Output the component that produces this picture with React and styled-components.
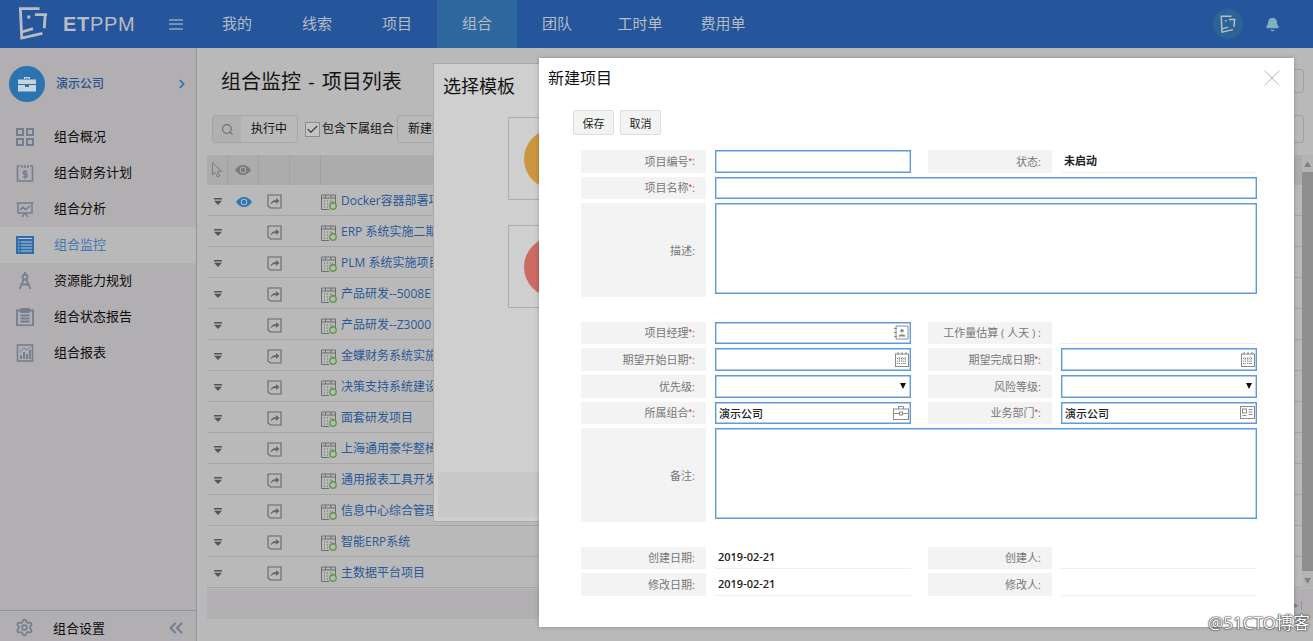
import React from "react";
import styled, { createGlobalStyle } from "styled-components";
import { Search, X, ChevronRight, ChevronsLeft, Check, Bell, Settings } from "lucide-react";

const GlobalStyle = createGlobalStyle`
  html, body {
    margin: 0;
    padding: 0;
    background: #b9b9b9;
  }
  * {
    box-sizing: border-box;
  }
  body {
    font-family: "Open Sans", "Noto Sans CJK SC", sans-serif;
  }
`;

const Page = styled.div`
  position: relative;
  width: 1313px;
  height: 641px;
  overflow: hidden;
  display: flex;
  flex-direction: column;
`;

const Header = styled.header`
  height: 48px;
  flex: none;
  display: flex;
  align-items: center;
  background: #25559a;
`;

const Brand = styled.div`
  width: 197px;
  height: 48px;
  flex: none;
  display: flex;
  align-items: center;
  padding-left: 18px;
`;

const BrandName = styled.span`
  margin-left: 15px;
  color: #b9bcc2;
  font-family: "Liberation Sans", sans-serif;
  font-size: 20px;
  letter-spacing: 0.7px;
  b {
    font-weight: 700;
  }
`;

const Burger = styled.span`
  margin-left: 34px;
  width: 14px;
  height: 11px;
  border-top: 2px solid #6f93b8;
  border-bottom: 2px solid #6f93b8;
  position: relative;
  &::after {
    content: "";
    position: absolute;
    left: 0;
    right: 0;
    top: 2.5px;
    height: 2px;
    background: #6f93b8;
  }
`;

const TopNav = styled.nav`
  display: flex;
  height: 48px;
`;

const TopItem = styled.a`
  width: ${(p) => p.$w || 80}px;
  display: flex;
  align-items: center;
  justify-content: center;
  padding-bottom: 4px;
  font-size: 15px;
  color: #b4bcc6;
  background: ${(p) => (p.$active ? "#2f689f" : "transparent")};
`;

const HeaderRight = styled.div`
  margin-left: auto;
  display: flex;
  align-items: center;
  gap: 22px;
  padding-right: 33px;
`;

const Avatar = styled.div`
  width: 30px;
  height: 30px;
  border-radius: 50%;
  background: #2a6499;
  display: flex;
  align-items: center;
  justify-content: center;
`;

const Body = styled.div`
  flex: 1;
  display: flex;
  min-height: 0;
`;

const Sidebar = styled.aside`
  width: 197px;
  flex: none;
  display: flex;
  flex-direction: column;
  background: #b2afb2;
  border-right: 1px solid #8e96a3;
`;

const Company = styled.div`
  height: 71px;
  display: flex;
  align-items: center;
  padding-left: 9px;
  padding-right: 7px;
`;

const CompanyBadge = styled.div`
  width: 36px;
  height: 36px;
  border-radius: 50%;
  background: #2c74b0;
  display: flex;
  align-items: center;
  justify-content: center;
`;

const CompanyName = styled.span`
  margin-left: 11px;
  padding-bottom: 2px;
  font-size: 12px;
  font-weight: 500;
  color: #27558f;
  flex: 1;
`;

const MenuItem = styled.a`
  height: 36px;
  display: flex;
  align-items: center;
  gap: 20px;
  padding-left: 16px;
  font-size: 13px;
  color: ${(p) => (p.$active ? "#4478b2" : "#0c0c0c")};
  background: ${(p) => (p.$active ? "#b9b9b9" : "transparent")};
  span {
    padding-bottom: 3px;
  }
`;

const SideFooter = styled.div`
  margin-top: auto;
  height: 31px;
  display: flex;
  align-items: center;
  border-top: 1px solid #8e96a3;
  padding: 3px 9px 0 15px;
  font-size: 13px;
  color: #0c0c0c;
  span {
    margin-left: 19px;
    padding-bottom: 1px;
    flex: 1;
  }
`;

const Main = styled.main`
  flex: 1;
  min-width: 0;
  padding: 21px 0 0 10px;
  background: #b9b9b9;
`;

const TitleRow = styled.div`
  height: 24px;
  margin-bottom: 22px;
  display: flex;
  align-items: center;
  padding-left: 14px;
  padding-right: 9px;
  justify-content: space-between;
`;

const Title = styled.h1`
  margin: 0;
  padding-bottom: 2px;
  font-size: 20px;
  font-weight: 400;
  word-spacing: 2px;
  color: #141414;
`;

const GhostButton = styled.div`
  width: 60px;
  height: ${(p) => p.$h || 24}px;
  border: 1px solid #a0a0a0;
  border-radius: 3px;
`;

const Toolbar = styled.div`
  height: 28px;
  margin: 0 9px 12px 5px;
  display: flex;
  align-items: center;
  font-size: 12px;
  color: #141414;
`;

const SearchGroup = styled.div`
  width: 86px;
  height: 28px;
  display: flex;
  border: 1px solid #a5a5a5;
  border-radius: 3px;
  overflow: hidden;
`;

const SearchIcon = styled.div`
  width: 28px;
  display: flex;
  align-items: center;
  justify-content: center;
  background: #b0b0b0;
`;

const SearchValue = styled.div`
  flex: 1;
  display: flex;
  align-items: center;
  justify-content: center;
  padding-bottom: 2px;
`;

const CheckBox = styled.span`
  width: 15px;
  height: 15px;
  margin-left: 7px;
  margin-right: 2px;
  border: 1px solid #8d8d8d;
  background: #c4c4c4;
  display: flex;
  align-items: center;
  justify-content: center;
`;

const CheckLabel = styled.span`
  padding-bottom: 2px;
`;

const NewButton = styled.div`
  height: 28px;
  margin-left: 3px;
  padding: 0 10px 2px;
  display: flex;
  align-items: center;
  border: 1px solid #a5a5a5;
  border-radius: 3px;
`;

const GhostPush = styled.div`
  margin-left: auto;
`;

const TableWrap = styled.div`
  display: flex;
`;

const Table = styled.div`
  flex: 1;
  min-width: 0;
`;

const Columns = "21px 31px 31px 31px 1fr";

const HeadRow = styled.div`
  height: 30px;
  display: grid;
  grid-template-columns: ${Columns};
  background: #acacac;
`;

const HeadCell = styled.div`
  display: flex;
  align-items: center;
  justify-content: center;
  border-right: 1px solid #a2a2a2;
  &:last-child {
    border-right: 0;
  }
`;

const Row = styled.div`
  height: 31px;
  padding-top: 3px;
  display: grid;
  grid-template-columns: ${Columns};
  align-items: center;
  border-bottom: 1px solid #a6a6a6;
`;

const Cell = styled.div`
  display: flex;
  align-items: center;
  justify-content: center;
`;

const NameCell = styled.div`
  display: flex;
  align-items: center;
  gap: 4px;
  font-size: 12px;
  color: #2a5897;
  white-space: nowrap;
  span {
    margin-top: -4px;
  }
`;

const Scrollbar = styled.div`
  width: 11px;
  flex: none;
  display: flex;
  flex-direction: column;
  align-items: center;
  background: #b4b4b4;
`;

const ScrollArrow = styled.div`
  height: 17px;
  display: flex;
  align-items: center;
  justify-content: center;
  color: #7f7f7f;
  font-size: 7px;
`;

const ScrollThumb = styled.div`
  flex: 1;
  width: 100%;
  background: #8e8e8e;
`;

const TableFooter = styled.div`
  height: 30px;
  margin-top: 1px;
  display: flex;
  align-items: center;
  padding-left: 1087px;
  background: #b2afb2;
  color: #808080;
  font-size: 9px;
`;

const TemplateModal = styled.section`
  position: absolute;
  left: 433px;
  top: 63px;
  width: 800px;
  height: 459px;
  background: #cfcfcf;
  border: 1px solid #a9a9a9;
  padding: 10px 0 0 9px;
`;

const TemplateTitle = styled.h2`
  margin: 0;
  font-size: 18px;
  font-weight: 400;
  color: #141414;
  line-height: 25px;
`;

const TemplateList = styled.div`
  margin: 18px 0 0 65px;
  display: flex;
  flex-direction: column;
  gap: 25px;
`;

const TemplateCard = styled.div`
  width: 300px;
  height: 83px;
  display: flex;
  align-items: center;
  padding-left: 15px;
  border: 1px solid #adadad;
`;

const TemplateDot = styled.div`
  width: 60px;
  height: 60px;
  border-radius: 50%;
  background: ${(p) => p.$color};
`;

const TemplateFooter = styled.div`
  position: absolute;
  left: 4px;
  right: 4px;
  bottom: 4px;
  height: 45px;
  background: #c8c8c8;
`;

const ProjectModal = styled.section`
  position: absolute;
  left: 539px;
  top: 58px;
  width: 755px;
  height: 569px;
  background: #fff;
  box-shadow: 0 0 4px rgba(0, 0, 0, 0.25);
`;

const ModalHead = styled.div`
  height: 40px;
  display: flex;
  align-items: center;
  justify-content: space-between;
  padding: 0 8px 0 9px;
`;

const ModalTitle = styled.h2`
  margin: 0;
  padding-bottom: 2px;
  font-size: 16px;
  font-weight: 400;
  color: #141414;
`;

const ModalActions = styled.div`
  margin: 12px 0 15px 34px;
  display: flex;
  gap: 6px;
`;

const ActionButton = styled.button`
  width: 41px;
  height: 25px;
  padding: 0;
  font-family: inherit;
  font-size: 11px;
  color: #222;
  background: #f3f3f3;
  border: 1px solid #dedede;
  border-radius: 2px;
`;

const Form = styled.div`
  margin-left: 42px;
  display: flex;
  flex-direction: column;
`;

const Section = styled.div`
  display: flex;
  flex-direction: column;
  gap: 4px;
  margin-bottom: 24.3px;
`;

const FormRow = styled.div`
  display: grid;
  grid-template-columns: 125px 196px 132px 196px;
  column-gap: 9px;
  height: ${(p) => p.$h || 22.67}px;
`;

const Label = styled.div`
  display: flex;
  align-items: center;
  justify-content: flex-end;
  padding: 0 11px 1px 0;
  margin-left: ${(p) => (p.$second ? 8 : 0)}px;
  font-size: 11px;
  color: #777;
  background: #f3f3f3;
  white-space: nowrap;
  i {
    font-family: "Liberation Sans", sans-serif;
    font-style: normal;
    font-size: 9px;
    color: #c0392b;
  }
`;

const Input = styled.div`
  grid-column: ${(p) => (p.$wide ? "span 3" : "auto")};
  height: ${(p) => (p.$area ? "91px" : "auto")};
  display: flex;
  align-items: center;
  justify-content: space-between;
  padding: 0 1px 0 3px;
  font-size: 11px;
  font-weight: 500;
  color: #222;
  background: #fff;
  border: 1px solid #5f9bdc;
  box-shadow: inset 0 0 0 0.4px #5f9bdc;
`;

const Static = styled.div`
  display: flex;
  align-items: center;
  padding: 0 0 1px 3px;
  font-size: 11px;
  font-weight: 600;
  color: #222;
  border-bottom: 1px solid #eee;
`;

const Caret = styled.span`
  width: 0;
  height: 0;
  margin-right: 3px;
  border-left: 3.5px solid transparent;
  border-right: 3.5px solid transparent;
  border-top: 6px solid #111;
`;

const Watermark = styled.div`
  position: absolute;
  right: 3px;
  bottom: 7px;
  font-size: 17px;
  color: #fff;
  text-shadow: 0 0 2px #333, 0 0 1px #333, 0 0 1px #333;
`;

const LogoMark = ({ size = 30, color = "#b9bcc2" }) => (
  <svg width={size} height={size * 1.17} viewBox="17 5 32 36" fill="none" stroke={color} strokeWidth="3">
    <path d="M40 7H19.500L21 38.500L43 33.500" />
    <path d="M21 32L33 28.500" />
    <path d="M35 13.500H48M46 13.500L45 28" />
    <circle cx="28.500" cy="16" r="1.800" fill={color} stroke="none" />
  </svg>
);

const Briefcase = ({ color = "#c9d3dc", size = 20 }) => (
  <svg width={size} height={size} viewBox="0 0 20 20" fill={color}>
    <path d="M7 5V3h6v2h-1.300V4.300H8.300V5z" />
    <path d="M1 5.500h18V10H1zM1 11h7v2h4v-2h7v6.500H1z" />
  </svg>
);

const ic = "#737f8f";

const GridIcon = () => (
  <svg width="18" height="18" viewBox="0 0 18 18" fill="none" stroke={ic} strokeWidth="2">
    <rect x="1" y="1" width="6" height="6" />
    <rect x="11" y="1" width="6" height="6" />
    <rect x="1" y="11" width="6" height="6" />
    <rect x="11" y="11" width="6" height="6" />
  </svg>
);

const BudgetIcon = () => (
  <svg width="18" height="18" viewBox="0 0 18 18" fill="none" stroke={ic} strokeWidth="1.600">
    <path d="M4 2H1.500v15h15V2H14M6 1v3M9 1v3M12 1v3" />
    <path d="M11.500 7.500H7.500v2.600h3.500v2.800H6.500M9 6v9" strokeWidth="1.300" />
  </svg>
);

const ChartBoardIcon = () => (
  <svg width="18" height="18" viewBox="0 0 18 18" fill="none" stroke={ic} strokeWidth="1.500">
    <path d="M0.500 3h17M2 3v10h14V3M6 17l3-4 3 4" />
    <path d="M4 10l3-3 2.500 2.500L14 6" />
  </svg>
);

const MonitorIcon = () => (
  <svg width="18" height="18" viewBox="0 0 18 18">
    <rect width="18" height="18" fill="#2f6cac" />
    <path d="M2 2.500h14M5 6h11M5 9h11M5 12h11M5 15h11" stroke="#b9c6d2" strokeWidth="1.200" />
    <path d="M2 6h1.500M2 9h1.500M2 12h1.500M2 15h1.500" stroke="#b9c6d2" strokeWidth="1.200" />
  </svg>
);

const CompassIcon = () => (
  <svg width="18" height="18" viewBox="0 0 18 18" fill="none" stroke={ic} strokeWidth="1.800">
    <circle cx="9" cy="5" r="2.500" />
    <path d="M7.800 7.500L3.500 17M10.200 7.500L14.500 17M4.500 12.500h9" />
    <path d="M9 0v2.500" />
  </svg>
);

const ReportIcon = () => (
  <svg width="18" height="18" viewBox="0 0 18 18" fill="none" stroke={ic} strokeWidth="1.800">
    <path d="M5 2.500H1v15h16v-15h-4" />
    <rect x="5" y="1" width="8" height="3" fill={ic} />
    <path d="M4.500 7.500h9M4.500 10.500h9M4.500 13.500h9" />
  </svg>
);

const StatsIcon = () => (
  <svg width="18" height="18" viewBox="0 0 18 18" fill="none" stroke={ic} strokeWidth="1.600">
    <rect x="1.500" y="1" width="15" height="16" />
    <path d="M5 15V11M8 15V8M11 15V10M14 15V6" strokeWidth="2" />
    <path d="M3.500 8L8 4l3 2 3.500-3" strokeWidth="1" />
  </svg>
);

const CursorIcon = () => (
  <svg width="10" height="16" viewBox="0 0 10 16" fill="none" stroke="#7b7b7b">
    <path d="M.5.800v12l3-2.600 2 4.800 2.200-1-2-4.600h4z" />
  </svg>
);

const EyeIcon = ({ color = "#7b7b7b", bg = "#acacac" }) => (
  <svg width="16" height="10" viewBox="0 0 16 10">
    <path d="M0 5C3 1 5.500 0 8 0s5 1 8 5c-3 4-5.500 5-8 5S3 9 0 5z" fill={color} />
    <circle cx="8" cy="5" r="3.200" fill={bg} />
    <circle cx="8" cy="5" r="2.200" fill={color} />
  </svg>
);

const SortIcon = () => (
  <svg width="8" height="7" viewBox="0 0 8 7" fill="#555">
    <rect x="0" y="0" width="8" height="1.500" />
    <path d="M0 2.800h8L4 7z" />
  </svg>
);

const OpenIcon = () => (
  <svg width="15" height="15" viewBox="0 0 15 15" fill="none" stroke="#666" strokeWidth="1.100">
    <path d="M1 1h13v13H3.500L1 12z" />
    <path d="M3.500 10.500C4 7.500 6 6 9 6V4l3.500 3L9 10V8c-2.500 0-4 .8-5.500 2.500z" fill="#666" stroke="none" />
  </svg>
);

const ProjectIcon = () => (
  <svg width="16" height="16" viewBox="0 0 16 16" fill="none">
    <path d="M.5 1h14v8M.5 1v14.500H8M.5 4h14M4.500 1v3M10 1v3" stroke="#6d6d6d" />
    <path d="M3 7h1M6 7h1M9 7h1M3 10h1M6 10h1M3 13h1M6 13h1" stroke="#6d6d6d" />
    <circle cx="12" cy="12" r="3.200" stroke="#5f9c45" strokeWidth="1.400" />
    <path d="M12 6.500v4l-2-2z" fill="#5f9c45" />
  </svg>
);

const CardIcon = () => (
  <svg width="16" height="15" viewBox="0 0 16 15" fill="none" stroke="#8a8a8a">
    <path d="M3 1h12v13H3zM1 3.500h3M1 7.500h3M1 11.500h3" />
    <circle cx="9" cy="5.800" r="1.800" fill="#8a8a8a" stroke="none" />
    <path d="M5.500 11.500c.5-3 6.500-3 7 0z" fill="#8a8a8a" stroke="none" />
  </svg>
);

const CalendarIcon = () => (
  <svg width="14" height="15" viewBox="0 0 14 15" fill="none" stroke="#8a8a8a">
    <rect x=".5" y="2" width="13" height="12.500" />
    <path d="M3 0v3M7 0v3M11 0v3" />
    <path d="M2 6.500h10M2 9h10M2 11.500h10M4 5v8M7 5v8M10 5v8" strokeDasharray="1 1" />
  </svg>
);

const CaseIcon = () => (
  <svg width="16" height="14" viewBox="0 0 16 14" fill="none" stroke="#8a8a8a">
    <rect x=".5" y="3" width="15" height="10.500" />
    <path d="M5.500 3V.5h5V3M.5 7.500h6M9.500 7.500h6" />
    <rect x="6.500" y="6" width="3" height="3" />
  </svg>
);

const DeptIcon = () => (
  <svg width="15" height="14" viewBox="0 0 15 14" fill="none" stroke="#8a8a8a">
    <rect x=".5" y=".5" width="14" height="12" />
    <rect x="2.500" y="3" width="4" height="4" />
    <path d="M8.500 3.500h4M8.500 6h4M8.500 8.500h4M2.500 9.500h4" />
  </svg>
);

const topItems = [
  { label: "我的" },
  { label: "线索" },
  { label: "项目" },
  { label: "组合", active: true },
  { label: "团队" },
  { label: "工时单", w: 86 },
  { label: "费用单" },
];

const menu = [
  { label: "组合概况", icon: <GridIcon /> },
  { label: "组合财务计划", icon: <BudgetIcon /> },
  { label: "组合分析", icon: <ChartBoardIcon /> },
  { label: "组合监控", icon: <MonitorIcon />, active: true },
  { label: "资源能力规划", icon: <CompassIcon /> },
  { label: "组合状态报告", icon: <ReportIcon /> },
  { label: "组合报表", icon: <StatsIcon /> },
];

const projects = [
  "Docker容器部署项目",
  "ERP 系统实施二期项目",
  "PLM 系统实施项目",
  "产品研发--5008E",
  "产品研发--Z3000",
  "金蝶财务系统实施",
  "决策支持系统建设",
  "面套研发项目",
  "上海通用豪华整椅",
  "通用报表工具开发",
  "信息中心综合管理",
  "智能ERP系统",
  "主数据平台项目",
];

const Req = () => <i>*</i>;

export default function App() {
  return (
    <Page>
      <GlobalStyle />
      <Header>
        <Brand>
          <LogoMark />
          <BrandName>
            <b>ET</b>PPM
          </BrandName>
          <Burger />
        </Brand>
        <TopNav>
          {topItems.map((t) => (
            <TopItem key={t.label} $active={t.active} $w={t.w}>
              {t.label}
            </TopItem>
          ))}
        </TopNav>
        <HeaderRight>
          <Avatar>
            <LogoMark size={16} />
          </Avatar>
          <Bell size={15} color="#7fb0c0" fill="#7fb0c0" />
        </HeaderRight>
      </Header>
      <Body>
        <Sidebar>
          <Company>
            <CompanyBadge>
              <Briefcase />
            </CompanyBadge>
            <CompanyName>演示公司</CompanyName>
            <ChevronRight size={14} color="#2c6db0" strokeWidth={3} />
          </Company>
          {menu.map((m) => (
            <MenuItem key={m.label} $active={m.active}>
              {m.icon}
              <span>{m.label}</span>
            </MenuItem>
          ))}
          <SideFooter>
            <Settings size={19} color={ic} strokeWidth={2.2} />
            <span>组合设置</span>
            <ChevronsLeft size={22} color={ic} strokeWidth={2.2} />
          </SideFooter>
        </Sidebar>
        <Main>
          <TitleRow>
            <Title>组合监控 - 项目列表</Title>
            <GhostButton />
          </TitleRow>
          <Toolbar>
            <SearchGroup>
              <SearchIcon>
                <Search size={13} color="#6b6b6b" />
              </SearchIcon>
              <SearchValue>执行中</SearchValue>
            </SearchGroup>
            <CheckBox>
              <Check size={13} color="#444" strokeWidth={2.5} />
            </CheckBox>
            <CheckLabel>包含下属组合</CheckLabel>
            <NewButton>新建项目</NewButton>
            <GhostPush>
              <GhostButton $h={28} />
            </GhostPush>
          </Toolbar>
          <TableWrap>
            <Table>
              <HeadRow>
                <HeadCell>
                  <CursorIcon />
                </HeadCell>
                <HeadCell>
                  <EyeIcon />
                </HeadCell>
                <HeadCell />
                <HeadCell />
                <HeadCell />
              </HeadRow>
              {projects.map((name, i) => (
                <Row key={name}>
                  <Cell>
                    <SortIcon />
                  </Cell>
                  <Cell>{i === 0 && <EyeIcon color="#2c74b8" bg="#b9b9b9" />}</Cell>
                  <Cell>
                    <OpenIcon />
                  </Cell>
                  <Cell />
                  <NameCell>
                    <ProjectIcon />
                    <span>{name}</span>
                  </NameCell>
                </Row>
              ))}
            </Table>
            <Scrollbar>
              <ScrollArrow>▲</ScrollArrow>
              <ScrollThumb />
              <ScrollArrow>▼</ScrollArrow>
            </Scrollbar>
          </TableWrap>
          <TableFooter>▸|</TableFooter>
        </Main>
      </Body>

      <TemplateModal>
        <TemplateTitle>选择模板</TemplateTitle>
        <TemplateList>
          <TemplateCard>
            <TemplateDot $color="#cc963f" />
          </TemplateCard>
          <TemplateCard>
            <TemplateDot $color="#cc6b64" />
          </TemplateCard>
        </TemplateList>
        <TemplateFooter />
      </TemplateModal>

      <ProjectModal>
        <ModalHead>
          <ModalTitle>新建项目</ModalTitle>
          <X size={28} color="#c4c4c4" strokeWidth={0.9} />
        </ModalHead>
        <ModalActions>
          <ActionButton>保存</ActionButton>
          <ActionButton>取消</ActionButton>
        </ModalActions>
        <Form>
          <Section>
            <FormRow>
              <Label>
                项目编号
                <Req />:
              </Label>
              <Input />
              <Label $second>状态:</Label>
              <Static>未启动</Static>
            </FormRow>
            <FormRow>
              <Label>
                项目名称
                <Req />:
              </Label>
              <Input $wide />
            </FormRow>
            <FormRow $h={94}>
              <Label>描述:</Label>
              <Input $wide $area />
            </FormRow>
          </Section>
          <Section>
            <FormRow>
              <Label>
                项目经理
                <Req />:
              </Label>
              <Input>
                <span />
                <CardIcon />
              </Input>
              <Label $second>工作量估算 ( 人天 ) :</Label>
              <Static />
            </FormRow>
            <FormRow>
              <Label>
                期望开始日期
                <Req />:
              </Label>
              <Input>
                <span />
                <CalendarIcon />
              </Input>
              <Label $second>
                期望完成日期
                <Req />:
              </Label>
              <Input>
                <span />
                <CalendarIcon />
              </Input>
            </FormRow>
            <FormRow>
              <Label>优先级:</Label>
              <Input>
                <span />
                <Caret />
              </Input>
              <Label $second>风险等级:</Label>
              <Input>
                <span />
                <Caret />
              </Input>
            </FormRow>
            <FormRow>
              <Label>
                所属组合
                <Req />:
              </Label>
              <Input>
                演示公司
                <CaseIcon />
              </Input>
              <Label $second>
                业务部门
                <Req />:
              </Label>
              <Input>
                演示公司
                <DeptIcon />
              </Input>
            </FormRow>
            <FormRow $h={94}>
              <Label>备注:</Label>
              <Input $wide $area />
            </FormRow>
          </Section>
          <Section>
            <FormRow>
              <Label>创建日期:</Label>
              <Static>2019-02-21</Static>
              <Label $second>创建人:</Label>
              <Static />
            </FormRow>
            <FormRow>
              <Label>修改日期:</Label>
              <Static>2019-02-21</Static>
              <Label $second>修改人:</Label>
              <Static />
            </FormRow>
          </Section>
        </Form>
      </ProjectModal>
      <Watermark>@51CTO博客</Watermark>
    </Page>
  );
}
